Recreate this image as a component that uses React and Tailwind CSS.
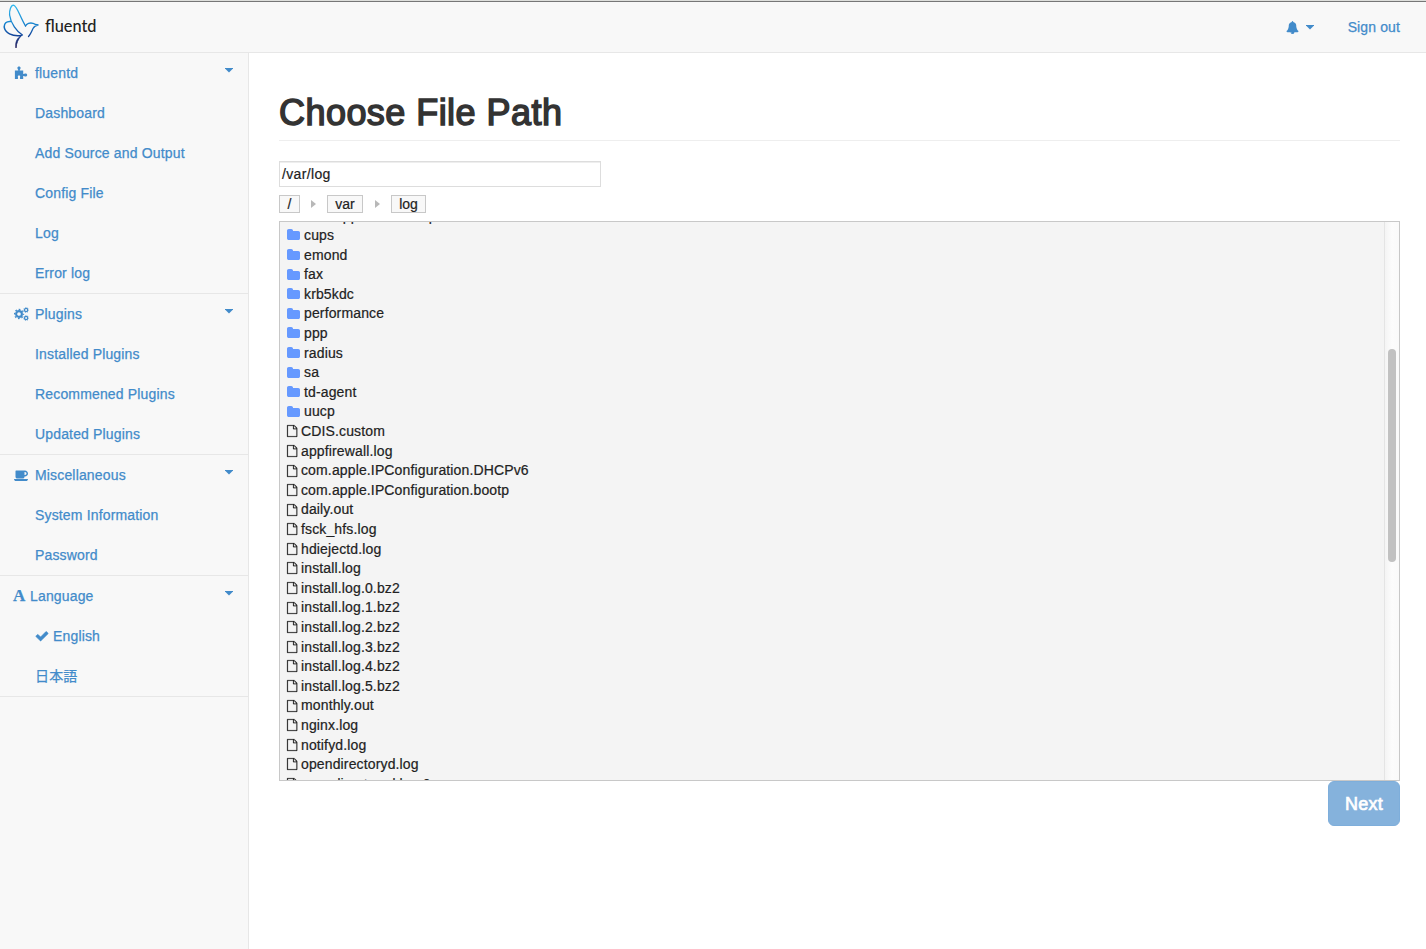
import React from "react";

function Icon({ w = 1792, h = 1792, className, d }) {
  return (
    <svg viewBox={`0 0 ${w} ${h}`} className={className} fill="currentColor">
      <path d={d} />
    </svg>
  );
}

const FILE =
  "M1468 380q28 28 48 76t20 88v1152q0 40-28 68t-68 28h-1344q-40 0-68-28t-28-68v-1600q0-40 28-68t68-28h896q40 0 88 20t76 48zm-444-244v376h376q-10-29-22-41l-313-313q-12-12-41-22zm384 1528v-1024h-416q-40 0-68-28t-28-68v-416h-768v1536h1280z";
const FOLDER =
  "M1664 608v704q0 92-66 158t-158 66h-1216q-92 0-158-66t-66-158v-960q0-92 66-158t158-66h320q92 0 158 66t66 158v32h672q92 0 158 66t66 158z";
const BELL =
  "M912 1696q0-16-16-16-59 0-101.5-42.5t-42.5-101.5q0-16-16-16t-16 16q0 73 51.5 124.5t124.5 51.5q16 0 16-16zm816-288q0 52-38 90t-90 38h-448q0 106-75 181t-181 75-181-75-75-181h-448q-52 0-90-38t-38-90q50-42 91-88t85-119.5 74.5-158.5 50-206 19.5-260q0-152 117-282.5t307-158.5q-8-19-8-39 0-40 28-68t68-28 68 28 28 68q0 20-8 39 190 28 307 158.5t117 282.5q0 139 19.5 260t50 206 74.5 158.5 85 119.5 91 88z";
const CHECK =
  "M1671 566q0 40-28 68l-724 724-136 136q-28 28-68 28t-68-28l-136-136-362-362q-28-28-28-68t28-68l136-136q28-28 68-28t68 28l294 295 656-657q28-28 68-28t68 28l136 136q28 28 28 68z";
const COFFEE =
  "M1600 704q0-80-56-136t-136-56h-64v384h64q80 0 136-56t56-136zm-1600 704h1792q0 106-75 181t-181 75h-1280q-106 0-181-75t-75-181zm1792-704q0 159-112.5 271.5t-271.5 112.5h-64v32q0 92-66 158t-158 66h-704q-92 0-158-66t-66-158v-736q0-26 19-45t45-19h1152q159 0 271.5 112.5t112.5 271.5z";

function Caret() {
  return (
    <svg viewBox="0 0 8 5" className="h-[5px] w-2" fill="currentColor">
      <path d="M0 0h8v0.500L4 4.500L0 0.500z" />
    </svg>
  );
}

function Puzzle() {
  return (
    <svg viewBox="0 0 14 14" className="h-3.5 w-3.5 shrink-0" fill="currentColor">
      <path d="M0.9 4.6H4.3C4.6 3.8 3.4 3.2 3.4 2C3.4 1 4.1.5 5 .5S6.6 1 6.6 2C6.6 3.2 5.4 3.8 5.700 4.600H9.200V7.600C9.300 8.700 10.400 7.500 11.600 7.500C12.500 7.500 13.200 8.100 13.200 9S12.500 10.500 11.600 10.500C10.400 10.500 9.300 9.300 9.200 10.300V13H6.300C5.500 12.500 6.200 11.500 6.200 10.600C6.200 9.900 5.800 9.400 5 9.400S3.800 9.900 3.800 10.600C3.800 11.500 4.500 12.500 3.700 13H.9Z" />
    </svg>
  );
}

function Gear({ cx, cy, r, ring, tooth, n }) {
  const c = 2 * Math.PI * (r + ring / 2 + tooth / 2);
  return (
    <g fill="none" stroke="currentColor">
      <circle cx={cx} cy={cy} r={r} strokeWidth={ring} />
      <circle
        cx={cx}
        cy={cy}
        r={r + ring / 2 + tooth / 2}
        strokeWidth={tooth}
        strokeDasharray={`${c / n / 2} ${c / n / 2}`}
        strokeDashoffset={c / n / 4}
      />
    </g>
  );
}

function Cogs() {
  return (
    <svg viewBox="0 0 15 14" className="h-3.5 w-[15px] shrink-0">
      <Gear cx={5} cy={7} r={2.9} ring={2.1} tooth={1.2} n={8} />
      <Gear cx={12.1} cy={3} r={1.6} ring={1.3} tooth={0.6} n={7} />
      <Gear cx={12.1} cy={11} r={1.6} ring={1.3} tooth={0.6} n={7} />
    </svg>
  );
}

function Logo() {
  return (
    <svg viewBox="0 2 40 48" className="h-12 w-10 shrink-0" fill="none" strokeLinecap="round">
      <defs>
        <linearGradient id="bird" x1="0" y1="3" x2="0" y2="47" gradientUnits="userSpaceOnUse">
          <stop offset="0" stopColor="#35bdf0" />
          <stop offset="0.45" stopColor="#1784cf" />
          <stop offset="0.7" stopColor="#12479d" />
          <stop offset="1" stopColor="#241a55" />
        </linearGradient>
      </defs>
      <g stroke="url(#bird)" strokeWidth="1.3">
        <path d="M22.500 34C17 31 10.500 22 9.600 14C9.200 9 11 4.200 13.500 4.200C17 4.700 20 16 25.500 25" />
        <path d="M10.500 20.500C6.500 20 4 22.500 4.200 26C5 32 12 35.500 21 34.500" strokeWidth="1.6" />
        <path d="M21.500 34.500C17 37 15 41 16 47C16.500 42 18 38 21.500 34.500Z" fill="#1b2a72" strokeWidth="0.8" />
        <path d="M25.500 25C26.500 22.500 30 21.500 33 22.300C34.500 23.500 36.500 23.800 38.500 23.900C35.500 24.500 34 25.500 33 27.500C31.500 31 30.500 33.500 28.500 35.500" />
      </g>
    </svg>
  );
}

const SECTIONS = [
  {
    icon: <Puzzle />,
    title: "fluentd",
    items: ["Dashboard", "Add Source and Output", "Config File", "Log", "Error log"],
  },
  {
    icon: <Cogs />,
    title: "Plugins",
    items: ["Installed Plugins", "Recommened Plugins", "Updated Plugins"],
  },
  {
    icon: <Icon w={1792} d={COFFEE} className="h-3.5 w-3.5 shrink-0" />,
    title: "Miscellaneous",
    items: ["System Information", "Password"],
  },
  {
    icon: null,
    title: "Language",
    items: ["English", "日本語"],
  },
];

const FOLDERS = ["com.apple.launchd-p", "cups", "emond", "fax", "krb5kdc", "performance", "ppp", "radius", "sa", "td-agent", "uucp"];
const FILES = [
  "CDIS.custom",
  "appfirewall.log",
  "com.apple.IPConfiguration.DHCPv6",
  "com.apple.IPConfiguration.bootp",
  "daily.out",
  "fsck_hfs.log",
  "hdiejectd.log",
  "install.log",
  "install.log.0.bz2",
  "install.log.1.bz2",
  "install.log.2.bz2",
  "install.log.3.bz2",
  "install.log.4.bz2",
  "install.log.5.bz2",
  "monthly.out",
  "nginx.log",
  "notifyd.log",
  "opendirectoryd.log",
  "opendirectoryd.log.0",
];

function Sidebar() {
  return (
    <nav className="w-[249px] shrink-0 border-r border-[#e7e7e7] bg-[#f8f8f8] tracking-[0.16px] text-[#428bca] [-webkit-text-stroke:0.25px_#428bca]">
      {SECTIONS.map((s) => (
        <section key={s.title} className="border-b border-[#e7e7e7]">
          <div className="flex h-10 items-center pl-3.5 pr-[15px]">
            {s.icon ? (
              <span className="flex w-[21px] items-center">{s.icon}</span>
            ) : (
              <span className="-ml-px w-[17px] font-['Liberation_Serif',serif] text-[17px] font-bold">A</span>
            )}
            <span className="flex-1">{s.title}</span>
            <span className="flex h-10 pt-[15px]">
              <Caret />
            </span>
          </div>
          {s.items.map((t) => (
            <div key={t} className="flex h-10 items-center pl-[35px]">
              {t === "English" && (
                <Icon d={CHECK} className="mr-1 h-3.5 w-3.5 stroke-[#428bca] [stroke-width:70px]" />
              )}
              {t}
            </div>
          ))}
        </section>
      ))}
    </nav>
  );
}

function Crumb({ children, className }) {
  return (
    <span className={`flex h-[18px] items-center justify-center border border-[#c8c8c8] bg-[#f8f8f8] leading-4 ${className}`}>
      {children}
    </span>
  );
}

function CrumbArrow({ className }) {
  return (
    <svg viewBox="0 0 5 8" className={`h-2 w-[5px] ${className}`} fill="#b8b8b8">
      <path d="M0 0L5 4L0 8z" />
    </svg>
  );
}

export default function App() {
  return (
    <div className="flex h-[949px] w-[1426px] flex-col overflow-hidden bg-white font-['Liberation_Sans','Noto_Sans_CJK_JP',sans-serif] text-[14px] leading-5 text-[#333]">
      <div className="h-0.5 shrink-0 border-b border-[#777] bg-[#dedfdc]" />
      <header className="flex h-[51px] shrink-0 items-center border-b border-[#e7e7e7] bg-[#f8f8f8] text-[#428bca]">
        <Logo />
        <span className="ml-[5px] flex-1 pb-0.5 font-[Lato,sans-serif] text-[16.3px] font-medium text-[#222]">
          fluentd
        </span>
        <Icon d={BELL} className="h-[13px] w-[13px]" />
        <span className="ml-[7px] mr-[34px]">
          <Caret />
        </span>
        <span className="mr-[26px] tracking-[0.12px] [-webkit-text-stroke:0.25px_#428bca]">Sign out</span>
      </header>
      <div className="flex min-h-0 flex-1">
        <Sidebar />
        <main className="flex-1 pl-[30px] pr-[26px] pt-10">
          <h1 className="h-12 whitespace-nowrap border-b border-[#eee] text-[36px] leading-[40px] tracking-[0.45px] [-webkit-text-stroke:1.5px_#333]">
            Choose File Path
          </h1>
          <div className="mt-5 flex h-[26px] w-[322px] items-center border border-[#ddd] pl-0.5 tracking-[0.35px] text-[#222] shadow-[inset_0_1px_0_#eee] [-webkit-text-stroke:0.2px_#222]">
            /var/log
          </div>
          <div className="mt-2 flex items-center text-[#222] [-webkit-text-stroke:0.2px_#222]">
            <Crumb className="w-[21px]">/</Crumb>
            <CrumbArrow className="ml-[11px] mr-[11px]" />
            <Crumb className="w-9">var</Crumb>
            <CrumbArrow className="ml-3 mr-[11px]" />
            <Crumb className="w-[35px]">log</Crumb>
          </div>
          <div className="mt-2 flex h-[560px] border border-[#c8c8c8] bg-[#f4f4f4]">
            <div className="min-w-0 flex-1 overflow-hidden pl-[7px]">
              <ul className="-mt-[15.5px] leading-[19.6px] tracking-[0.14px] text-[#222] [-webkit-text-stroke:0.2px_#222]">
                {FOLDERS.map((n) => (
                  <li key={n} className="flex h-[19.6px] items-center">
                    <Icon w={1664} d={FOLDER} className="mb-px mr-1 h-3.5 w-[13px] text-[#6699ff]" />
                    {n}
                  </li>
                ))}
                {FILES.map((n) => (
                  <li key={n} className="flex h-[19.6px] items-center">
                    <Icon
                      w={1536}
                      d={FILE}
                      className="mb-px mr-[3.7px] h-3 w-[10.3px] overflow-visible stroke-[#222] [stroke-width:30px]"
                    />
                    {n}
                  </li>
                ))}
              </ul>
            </div>
            <div className="flex w-[15px] justify-center border-l border-[#e4e4e4] bg-linear-to-r from-[#f4f4f4] via-[#fcfcfc] to-[#fafafa]">
              <div className="mt-[127px] h-[213px] w-2 rounded-full bg-[#c1c1c1]" />
            </div>
          </div>
          <div className="flex justify-end">
            <button className="h-[45px] w-[72px] rounded-md border border-[#7eaedb] bg-[#85b2dc] text-[18px] tracking-[0.2px] text-white [-webkit-text-stroke:0.7px_white]">
              Next
            </button>
          </div>
        </main>
      </div>
    </div>
  );
}
